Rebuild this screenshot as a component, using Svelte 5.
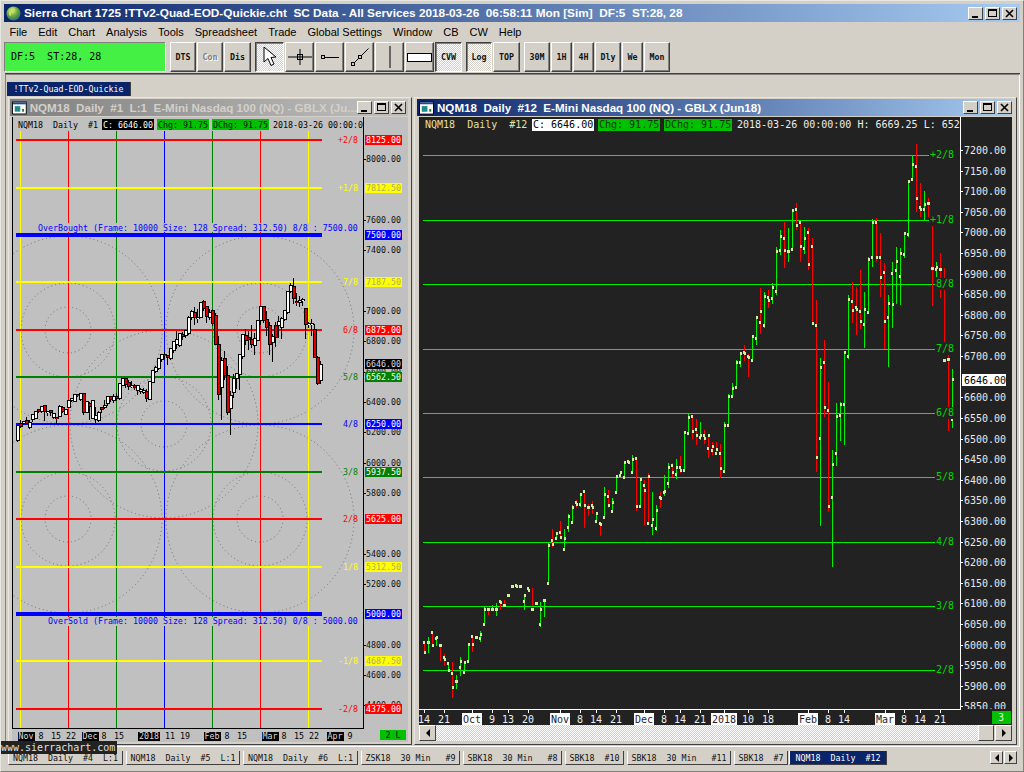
<script>
  const raw = [
    [643,652,642,652,'r'],[637,653,642,642,'g'],[632,644,632,645,'r'],[637,646,638,637,'g'],[645,661,645,645,'r'],[654,666,657,659,'r'],[663,672,663,670,'g'],[662,698,673,687,'r'],
    [675,689,681,681,'g'],[657,676,667,661,'g'],[662,673,672,662,'g'],[643,663,661,644,'g'],[637,652,636,644,'r'],[636,639,637,637,'g'],[631,642,638,634,'g'],[607,626,624,609,'g'],
    [608,615,609,609,'r'],[605,610,609,609,'g'],[603,616,609,609,'g'],[601,610,601,602,'r'],[600,606,605,605,'r'],[595,595,595,595,'g'],[586,586,586,586,'g'],[585,586,585,586,'g'],
    [586,586,586,586,'g'],[595,610,601,595,'g'],[588,590,588,590,'r'],[588,606,609,609,'r'],[603,603,603,603,'g'],[602,627,624,609,'g'],[600,617,600,600,'g'],[543,585,583,545,'g'],
    [529,547,540,544,'r'],[532,540,538,533,'g'],[521,538,532,537,'r'],[529,550,549,538,'g'],[514,532,527,516,'g'],[505,523,522,507,'g'],[500,508,502,504,'r'],[493,507,504,494,'g'],
    [490,528,491,505,'r'],[504,516,507,507,'r'],[501,514,505,507,'r'],[512,523,521,513,'g'],[522,536,523,524,'r'],[487,519,517,494,'g'],[490,508,496,505,'r'],[498,512,511,502,'g'],
    [476,493,492,476,'g'],[471,477,475,472,'g'],[461,478,477,462,'g'],[460,464,461,462,'r'],[455,473,472,459,'g'],[457,511,458,506,'r'],[477,507,506,479,'g'],[480,525,485,490,'r'],
    [473,524,523,476,'r'],[492,535,525,519,'g'],[505,531,528,510,'g'],[492,508,497,498,'r'],[475,496,492,491,'g'],[463,488,483,467,'g'],[463,477,465,472,'r'],[459,479,474,467,'g'],
    [456,473,467,470,'r'],[432,472,470,432,'g'],[414,433,433,417,'g'],[415,439,416,431,'r'],[419,445,429,435,'r'],[422,440,437,435,'g'],[430,444,435,438,'r'],[437,458,448,435,'r'],
    [442,455,450,446,'r'],[442,455,453,449,'r'],[444,478,453,468,'r'],[422,472,471,425,'g'],[394,426,425,396,'g'],[383,398,396,388,'g'],[360,389,387,362,'g'],[353,367,362,353,'g'],
    [345,361,352,353,'r'],[354,377,356,357,'r'],[335,362,360,336,'g'],[316,345,338,317,'g'],[288,334,322,311,'r'],[292,328,325,296,'g'],[290,308,297,300,'r'],[283,304,298,287,'g'],
    [247,295,291,251,'g'],[230,255,250,236,'g'],[222,268,238,250,'r'],[228,262,251,251,'g'],[210,250,249,210,'g'],[203,230,209,225,'r'],[222,262,222,246,'r'],[227,254,248,238,'g'],
    [228,270,232,264,'r'],[238,323,246,323,'r'],[300,472,325,457,'r'],[358,526,438,367,'g'],[340,417,362,407,'r'],[382,512,410,506,'r'],[450,567,497,464,'g'],[403,466,453,416,'g'],
    [402,441,415,404,'g'],[351,445,404,352,'g'],[295,359,356,299,'g'],[282,323,301,310,'r'],[287,335,307,309,'r'],[270,329,311,321,'r'],[292,348,324,309,'g'],[257,312,312,259,'g'],
    [219,267,257,222,'g'],[218,261,222,257,'r'],[233,297,257,277,'r'],[263,349,272,321,'r'],[295,367,317,303,'g'],[262,328,273,304,'g'],[247,304,270,261,'g'],[248,305,276,253,'g'],
    [232,258,254,233,'g'],[180,237,234,181,'g'],[156,181,179,164,'g'],[144,212,166,198,'r'],[183,217,207,209,'r'],[191,220,209,204,'g'],[198,217,203,203,'r'],[226,306,268,268,'r',226,268],
    [262,277,269,267,'g'],[253,298,269,269,'r'],[268,342,360,360,'r',284,357],[355,431,359,359,'r',359,428],[369,428,419,379,'g']
  ];
  const bars = raw.map((b, i) => ({
    x: 424 + 4 * i, hi: b[0], lo: b[1], o: b[2], c: b[3], col: b[4] === 'g' ? '#00f000' : '#ff0000',
    lo2: b[5] ?? b[2], lc2: b[6] ?? b[3], lowEnd: b[6] ? Math.max(b[1], b[6]) : b[1]
  }));
  const ly = (y) => Math.round(280.66 + (y - 150) * 0.368);
  const candles = bars.filter((b) => b.x >= 548).map((b) => ({
    x: Math.round(26 + (b.x - 560) * 0.75),
    hi: ly(b.hi), lo: ly(b.lowEnd), o: ly(b.lo2), c: ly(b.lc2), up: b.lc2 <= b.lo2
  }));

  const vlines = [[20,'#ffff00'],[68,'#ff0000'],[116,'#008000'],[164,'#0000ff'],[212,'#008000'],[260,'#ff0000'],[308,'#ffff00']];
  const levels = [
    ['+2/8',140,'#ff0000','8125.00',2],['+1/8',188,'#ffff00','7812.50',2],['',235,'#0000ff','7500.00',4],['7/8',282,'#ffff00','7187.50',2],
    ['6/8',330,'#ff0000','6875.00',2],['5/8',377,'#008000','6562.50',2],['4/8',424,'#0000ff','6250.00',2],['3/8',472,'#008000','5937.50',2],
    ['2/8',519,'#ff0000','5625.00',2],['1/8',567,'#ffff00','5312.50',2],['',614,'#0000ff','5000.00',4],['-1/8',661,'#ffff00','4687.50',2],['-2/8',709,'#ff0000','4375.00',2]
  ];
  const circles = [];
  for (const [cx, cy] of [[68,330],[260,330],[164,424],[68,519],[260,519]]) for (const r of [23,47,94]) circles.push({ cx, cy, r });
  const leftAxis = [];
  for (const p of [8000,7600,7400,7000,6800,6600,6400,6200,6000,5800,5400,5200,4800,4600,4400]) leftAxis.push({ t: p.toFixed(2), y: Math.round(311 + (7000 - p) * 0.1517) });
  const leftDates = [['Nov',26,1],['8',41],['15',56],['22',71],['Dec',90,1],['8',104],['15',119],['2018',149,1],['11',170],['19',185],['Feb',212,1],['8',227],['15',242],['Mar',270,1],['8',284],['15',299],['22',314],['Apr',335,1],['9',350]];

  const rightLevels = [['+2/8',155,930],['+1/8',220,930],['8/8',284,936],['7/8',349,936],['6/8',413,936],['5/8',477,936],['4/8',542,936],['3/8',606,936],['2/8',670,936]];
  const rightAxis = [];
  for (let i = 0; i <= 27; i++) if (i !== 11) rightAxis.push({ t: (7200 - 50 * i).toFixed(2), y: Math.round(150 + 20.61 * i) });
  const rightDates = [['14',424],['21',444],['Oct',472,1],['9',492],['13',508],['20',528],['Nov',560,1],['8',580],['14',596],['21',616],['Dec',644,1],['8',664],['14',680],['21',700],['2018',724,1],['10',748],['18',768],['Feb',808,1],['8',828],['14',844],['Mar',885,1],['8',904],['14',920],['21',940]];

  const menus = ['File','Edit','Chart','Analysis','Tools','Spreadsheet','Trade','Global Settings','Window','CB','CW','Help'];
  const tabs = [
    ['NQM18  Daily  #4  L:1',115],['NQM18  Daily  #5  L:1',114],['NQM18  Daily  #6  L:1',115],['ZSK18  30 Min   #9',99],['SBK18  30 Min   #8',99],
    ['SBK18  #10',59],['SBK18  30 Min   #11',104],['SBK18  #7',54]
  ];
</script>

<div class="app">
  <header class="titlebar main">
    <svg class="globe" viewBox="0 0 15 15" width="15" height="15">
      <defs>
        <radialGradient id="gl" cx="0.4" cy="0.3" r="0.8"><stop offset="0" stop-color="#e6f2a0"/><stop offset="0.45" stop-color="#6fae3a"/><stop offset="1" stop-color="#1d5a8a"/></radialGradient>
      </defs>
      <circle cx="7.5" cy="7.5" r="7" fill="url(#gl)"/>
      <path d="M3 5 Q6 2 9 3 L8 6 L5 7 L5 10 L3 9Z" fill="#c8e060"/>
    </svg>
    <span class="ttext">Sierra Chart 1725 !TTv2-Quad-EOD-Quickie.cht  SC Data - All Services 2018-03-26  06:58:11 Mon [Sim]  DF:5  ST:28, 28</span>
    <div class="wbtns">
      <button class="wb"><i class="min"></i></button><button class="wb"><i class="max"></i></button><button class="wb"><svg viewBox="0 0 9 9" width="9" height="9"><path d="M1 1L8 8M8 1L1 8" stroke="#000" stroke-width="1.6"/></svg></button>
    </div>
  </header>

  <nav class="menu">
    {#each menus as m}<span>{m}</span>{/each}
  </nav>

  <div class="toolbar">
    <div class="status">DF:5  ST:28, 28</div>
    <div class="grp">
      <button class="tb w26">DTS</button><button class="tb w26 dis">Con</button><button class="tb w27">Dis</button>
    </div>
    <div class="grp">
      <button class="tb w29 on">
        <svg viewBox="0 0 16 22" width="16" height="22"><path d="M2 1 L2 16 L6 12.5 L9 19.5 L12 18 L9 11.5 L14 11 Z" fill="#fff" stroke="#000" stroke-width="1"/></svg>
      </button>
      <button class="tb w29">
        <svg viewBox="0 0 26 18" width="26" height="18"><path d="M1 9H25M13 1V17" stroke="#000"/><rect x="10.5" y="6.5" width="5" height="5" fill="none" stroke="#000"/></svg>
      </button>
      <button class="tb w29">
        <svg viewBox="0 0 20 10" width="20" height="10"><rect x="1.5" y="3.5" width="3" height="3" fill="none" stroke="#000"/><path d="M5 5.5H19" stroke="#000"/></svg>
      </button>
      <button class="tb w29">
        <svg viewBox="0 0 20 20" width="20" height="20"><rect x="1.5" y="15.5" width="3" height="3" fill="none" stroke="#000"/><rect x="8.5" y="8.5" width="3" height="3" fill="none" stroke="#000"/><path d="M4.5 15.5L8.5 11.5M11.5 8.5L18.5 1.5" stroke="#000"/></svg>
      </button>
      <button class="tb w29"><svg viewBox="0 0 2 22" width="2" height="22"><path d="M1 0V22" stroke="#000"/></svg></button>
      <button class="tb w29 rectb"><i></i></button>
      <button class="tb w27 on">CVW</button>
    </div>
    <div class="grp">
      <button class="tb w26 on">Log</button><button class="tb w27">TOP</button>
    </div>
    <div class="grp">
      <button class="tb w26">30M</button><button class="tb w21">1H</button><button class="tb w21">4H</button><button class="tb w26">Dly</button><button class="tb w21">We</button><button class="tb w26">Mon</button>
    </div>
  </div>

  <section class="mdi">
    <div class="subtabs"><span class="subtab">!TTv2-Quad-EOD-Quickie</span></div>

    <article class="win left">
      <header class="titlebar child inactive">
        <svg class="wicon" viewBox="0 0 16 14" width="15" height="14"><rect x="0.5" y="0.5" width="15" height="13" fill="#fff" stroke="#000"/><rect x="1" y="1" width="14" height="2" fill="#1a4a9a"/><rect x="3" y="5" width="6" height="6" fill="#1e8a8a"/><rect x="11" y="8" width="2" height="3" fill="#2a7a2a"/></svg>
        <span class="ttext clip">NQM18  Daily  #1  L:1  E-Mini Nasdaq 100 (NQ) - GBLX (Ju...</span>
        <div class="wbtns">
          <button class="wb"><i class="min"></i></button><button class="wb"><i class="max"></i></button><button class="wb"><svg viewBox="0 0 9 9" width="9" height="9"><path d="M1 1L8 8M8 1L1 8" stroke="#000" stroke-width="1.6"/></svg></button>
        </div>
      </header>
      <svg class="chart lchart" viewBox="12 117 396 625" width="396" height="625">
        <rect x="12" y="117" width="396" height="625" fill="#c0c0c0"/>
        {#each circles as c}
          <circle cx={c.cx} cy={c.cy} r={c.r} fill="none" stroke="#707070" stroke-width="1" stroke-dasharray="1 3"/>
        {/each}
        {#each vlines as v}
          <rect x={v[0]} y="131" width="1" height="597" fill={v[1]}/>
        {/each}
        {#each levels as l}
          <rect x="16" y={l[1] - l[4] / 2} width="306" height={l[4]} fill={l[2]}/>
        {/each}
        {#each candles as c}
          <rect x={c.x} y={c.hi} width="1" height={c.lo - c.hi + 1} fill="#000"/>
          <rect x={c.x - 1} y={Math.min(c.o, c.c) - 1} width="4" height={Math.abs(c.o - c.c) + 2} fill="#000"/>
          <rect x={c.x} y={Math.min(c.o, c.c)} width="2" height={Math.max(Math.abs(c.o - c.c), 1)} fill={c.up ? '#fff' : '#e00000'}/>
        {/each}
        <rect x="38" y="223" width="320" height="9" fill="#c0c0c0"/>
        <text class="t5" x="38" y="231" fill="#0000ff">OverBought (Frame: 10000 Size: 128 Spread: 312.50) 8/8 : 7500.00</text>
        <rect x="48" y="617" width="310" height="9" fill="#c0c0c0"/>
        <text class="t5" x="48" y="624" fill="#0000ff">OverSold (Frame: 10000 Size: 128 Spread: 312.50) 0/8 : 5000.00</text>
        {#each levels as l}
          {#if l[0]}
            <text class="t5" x="358" y={l[1] + 3} fill={l[2]} text-anchor="end">{l[0]}</text>
          {/if}
        {/each}
        <rect x="12" y="117" width="1" height="611" fill="#000"/>
        <rect x="363" y="117" width="1" height="612" fill="#000"/>
        <rect x="12" y="728" width="351" height="1" fill="#000"/>
        {#each leftAxis as a}
          <rect x="364" y={a.y} width="2" height="1" fill="#000"/>
          <text class="t5" x="366" y={a.y + 3} fill="#111">{a.t}</text>
        {/each}
        {#each levels as l}
          <rect x="365" y={l[1] - 5} width="37" height="10" fill={l[2]}/>
          <text class="t5" x="366" y={l[1] + 3} fill={l[2] === '#ffff00' ? '#b0b060' : '#fff'}>{l[3]}</text>
        {/each}
        <rect x="365" y="359" width="37" height="10" fill="#000"/>
        <text class="t5" x="366" y="367" fill="#ddd">6646.00</text>
        <rect x="13" y="118" width="350" height="13" fill="#c0c0c0"/>
        <text class="t5" x="18" y="128" fill="#000" xml:space="preserve">NQM18  Daily  #1</text>
        <rect x="102" y="119" width="52" height="11" fill="#000"/>
        <text class="t5" x="103" y="128" fill="#fff">C: 6646.00</text>
        <rect x="157" y="119" width="52" height="11" fill="#00c000"/>
        <text class="t5" x="158" y="128" fill="#111">Chg: 91.75</text>
        <rect x="212" y="119" width="57" height="11" fill="#00c000"/>
        <text class="t5" x="213" y="128" fill="#111">DChg: 91.75</text>
        <text class="t5" x="273" y="128" fill="#000">2018-03-26 00:00:00</text>
        <rect x="364" y="118" width="44" height="14" fill="#c0c0c0"/>
        <rect x="363" y="118" width="1" height="13" fill="#000"/>
        {#each leftDates as d}
          {#if d[2]}
            <rect x={d[0].length > 3 ? d[1] - 11 : d[1] - 8} y="732" width={d[0].length > 3 ? 22 : 17} height="9" fill="#000"/>
          {/if}
          <text class="t5" x={d[1]} y="739" text-anchor="middle" fill={d[2] ? '#ddd' : '#000'}>{d[0]}</text>
        {/each}
        <rect x="380" y="730" width="26" height="10" fill="#00c000"/>
        <text class="t5" x="393" y="738" text-anchor="middle" fill="#000" xml:space="preserve">2 L</text>
      </svg>
    </article>

    <article class="win right">
      <header class="titlebar child">
        <svg class="wicon" viewBox="0 0 16 14" width="15" height="14"><rect x="0.5" y="0.5" width="15" height="13" fill="#fff" stroke="#000"/><rect x="1" y="1" width="14" height="2" fill="#1a4a9a"/><rect x="3" y="5" width="6" height="6" fill="#1e8a8a"/><rect x="11" y="8" width="2" height="3" fill="#2a7a2a"/></svg>
        <span class="ttext">NQM18  Daily  #12  E-Mini Nasdaq 100 (NQ) - GBLX (Jun18)</span>
        <div class="wbtns">
          <button class="wb"><i class="min"></i></button><button class="wb"><i class="max"></i></button><button class="wb"><svg viewBox="0 0 9 9" width="9" height="9"><path d="M1 1L8 8M8 1L1 8" stroke="#000" stroke-width="1.6"/></svg></button>
        </div>
      </header>
      <svg class="chart rchart" viewBox="419 117 593 608" width="593" height="608">
        <rect x="419" y="117" width="593" height="608" fill="#222"/>
        {#each rightLevels as l}
          <rect x="423" y={l[1]} width={l[2] - 424} height="1" fill="#00f000"/>
        {/each}
        {#each bars as b}
          {#if b.lo > b.hi}<rect x={b.x} y={b.hi} width="1" height={b.lo - b.hi} fill={b.col}/>{/if}
          <rect x={b.x - 1} y={b.o - 1} width="2" height="3" fill="#d0f0a0"/>
          <rect x={b.x} y={b.c - 1} width="2" height="3" fill="#d0f0a0"/>
        {/each}
        {#each rightLevels as l}
          <rect x={l[2]} y={l[1] - 6} width={954 - l[2]} height="12" fill="#222"/>
          <text class="t6" x={l[2]} y={l[1] + 3} fill="#00d800">{l[0]}</text>
        {/each}
        <rect x="419" y="118" width="541" height="13" fill="#222"/>
        <text class="t6" x="425" y="128" fill="#e8e0a0" xml:space="preserve">NQM18  Daily  #12</text>
        <rect x="532" y="119" width="62" height="12" fill="#fff"/>
        <text class="t6" x="533" y="128" fill="#000">C: 6646.00</text>
        <rect x="598" y="119" width="62" height="12" fill="#00c000"/>
        <text class="t6" x="599" y="128" fill="#0a3a0a">Chg: 91.75</text>
        <rect x="664" y="119" width="68" height="12" fill="#00c000"/>
        <text class="t6" x="665" y="128" fill="#0a3a0a">DChg: 91.75</text>
        <text class="t6" x="737" y="128" fill="#eee">2018-03-26 00:00:00 H: 6669.25 L: 652</text>
        <rect x="960" y="117" width="1" height="593" fill="#fff"/>
        {#each rightAxis as a}
          <rect x="961" y={a.y} width="2" height="1" fill="#fff"/>
          <text class="t6" x="964" y={a.y + 4} fill="#e8e8e8">{a.t}</text>
        {/each}
        <rect x="961" y="709" width="51" height="16" fill="#222"/>
        <rect x="419" y="709" width="542" height="1" fill="#fff"/>
        <rect x="962" y="374" width="44" height="12" fill="#fff"/>
        <text class="t6" x="964" y="384" fill="#000">6646.00</text>
        {#each rightDates as d}
          <rect x={d[1]} y="710" width="1" height="3" fill="#fff"/>
          {#if d[2]}
            <rect x={d[0].length > 3 ? d[1] - 13 : d[1] - 10} y="713" width={d[0].length > 3 ? 26 : 20} height="12" fill="#fff"/>
          {/if}
          <text class="t6" x={d[1]} y="723" text-anchor="middle" fill={d[2] ? '#223' : '#eee'}>{d[0]}</text>
        {/each}
        <rect x="992" y="711" width="19" height="13" fill="#00c000"/>
        <text class="t6" x="1001" y="721" text-anchor="middle" fill="#dfd">3</text>
      </svg>
      <div class="hscroll">
        <button class="sb"><i class="al"></i></button>
        <div class="track"></div>
        <button class="sb thumb"></button>
        <button class="sb"><i class="ar"></i></button>
      </div>
    </article>
  </section>

  <footer class="tabs">
    <div class="tablist">
      {#each tabs as t}
        <span class="tab" style="width:{t[1]}px">{t[0]}</span>
      {/each}
      <span class="tab active">NQM18  Daily  #12</span>
    </div>
    <div class="tabnav">
      <button class="sb mini"><i class="al"></i></button><button class="sb mini"><i class="ar"></i></button>
    </div>
  </footer>

  <div class="watermark">www.sierrachart.com</div>
</div>

<style>
  :global(body) { margin: 0; background: #d4d0c8; }
  .app {
    position: relative; box-sizing: border-box; width: 1024px; height: 772px; overflow: hidden;
    background: #d4d0c8; padding: 3px 3px 0; display: flex; flex-direction: column;
    border: 1px solid #808080; border-top-color: #e8e6e0; border-left-color: #e8e6e0;
    font-family: "DejaVu Sans Mono", monospace;
  }
  .titlebar { display: flex; align-items: center; box-sizing: border-box; color: #fff; flex: none; }
  .titlebar.main { height: 18px; background: linear-gradient(90deg, #0a246a, #a6caf0); padding-left: 2px; }
  .ttext {
    font-family: "Liberation Sans", sans-serif; font-weight: 700; font-size: 11.8px; white-space: pre; margin-left: 3px;
  }
  .wbtns { margin-left: auto; display: flex; gap: 2px; margin-right: 3px; }
  .wb {
    box-sizing: border-box; width: 15px; height: 13px; padding: 0; background: #d4d0c8; display: flex; align-items: center; justify-content: center;
    border: 1px solid; border-color: #fff #404040 #404040 #fff; position: relative;
  }
  .min { position: absolute; left: 3px; bottom: 1px; width: 6px; height: 2px; background: #000; }
  .max { position: absolute; left: 2px; top: 1px; width: 9px; height: 8px; box-sizing: border-box; border: 1px solid #000; border-top-width: 2px; }
  .menu {
    height: 20px; flex: none; display: flex; align-items: center;
    font-family: "Liberation Sans", sans-serif; font-size: 11px; color: #000; white-space: pre;
  }
  .menu span { padding: 0 5.5px; }
  .toolbar { height: 30px; flex: none; display: flex; align-items: stretch; }
  .status {
    box-sizing: border-box; width: 162px; background: #44f044; border: 1px solid; border-color: #808080 #fff #fff #808080;
    font-size: 10px; color: #000; line-height: 28px; padding-left: 6px; white-space: pre;
  }
  .grp { display: flex; gap: 1px; margin-left: 4px; }
  .tb {
    box-sizing: border-box; padding: 0; background: #d4d0c8; border: 1px solid; border-color: #fff #404040 #404040 #fff;
    box-shadow: inset -1px -1px #808080; display: flex; align-items: center; justify-content: center;
    font-family: "DejaVu Sans Mono", monospace; font-weight: 700; font-size: 8.3px; color: #111;
  }
  .w21 { width: 21px; } .w26 { width: 26px; } .w27 { width: 27px; } .w29 { width: 29px; }
  .dis { color: #808080; text-shadow: 1px 1px #fff; }
  .on {
    background: repeating-conic-gradient(#fff 0 25%, #d4d0c8 0 50%) 0 0 / 2px 2px;
    border-color: #404040 #fff #fff #404040; box-shadow: inset 1px 1px #808080;
  }
  .rectb i { display: block; width: 25px; height: 9px; background: #fff; border: 1px solid #000; box-sizing: border-box; }
  .mdi { position: relative; flex: 1; min-height: 0; margin-top: 2px; border: 1px solid; border-color: #808080 #fff #fff #808080; margin-left: 1px; box-shadow: 0 -1px #404040; }
  .subtabs { height: 17px; padding: 2px 0 0 1px; box-sizing: border-box; }
  .subtab {
    display: inline-block; box-sizing: border-box; width: 124px; height: 14px; background: #0a246a; color: #fff; font-size: 8.3px; line-height: 14px; text-align: center;
    border-right: 1px solid #404040;
  }
  .win {
    position: absolute; box-sizing: border-box; top: 22px; display: flex; flex-direction: column;
    border: 1px solid; border-color: #e8e6e0 #404040 #404040 #e8e6e0; background: #d4d0c8;
  }
  .win.left { left: 2px; width: 404px; height: 648px; padding: 1px 3px 3px; }
  .win.right { left: 408px; width: 603px; height: 648px; padding: 1px 4px 3px; }
  .child { height: 17px; padding-left: 2px; margin-left: -2px; background: linear-gradient(90deg, #0a246a, #a6caf0); }
  .child.inactive { background: linear-gradient(90deg, #808080, #c0c0c0); }
  .child.inactive .ttext { color: #d4d0c8; }
  .child .ttext { font-size: 11.6px; }
  .clip { max-width: 330px; }
  .win.left .wbtns { margin-right: 2px; }
  .win.right .wbtns { margin-right: 0; }
  .chart { display: block; flex: none; margin-top: 1px; }
  .chart text { font-family: "DejaVu Sans Mono", monospace; white-space: pre; }
  .t5 { font-size: 8.3px; }
  .t6 { font-size: 10px; }
  .hscroll { display: flex; height: 16px; flex: none; }
  .sb {
    box-sizing: border-box; width: 17px; height: 16px; padding: 0; background: #d4d0c8; border: 1px solid; border-color: #fff #404040 #404040 #fff;
    display: flex; align-items: center; justify-content: center; flex: none;
  }
  .thumb { width: 16px; margin-right: 1px; }
  .track { flex: 1; background: repeating-conic-gradient(#fff 0 25%, #d4d0c8 0 50%) 0 0 / 2px 2px; }
  .al, .ar { width: 0; height: 0; border: 4px solid transparent; }
  .al { border-right: 4px solid #000; border-left-width: 0; }
  .ar { border-left: 4px solid #000; border-right-width: 0; }
  .tabs { height: 24px; flex: none; display: flex; box-sizing: border-box; padding: 4px 2px 0 4px; }
  .tablist { display: flex; gap: 3px; align-items: flex-start; }
  .tab {
    box-sizing: border-box; height: 14px; font-size: 8.3px; line-height: 14px; color: #111; white-space: pre; text-align: center; background: #d4d0c8;
    border-right: 1px solid #404040; border-bottom: 1px solid #404040; border-left: 1px solid #fff; flex: none;
  }
  .tab.active { background: #0a246a; color: #fff; width: 98px; height: 14px; margin-left: -2px; }
  .tabnav { margin-left: auto; display: flex; gap: 1px; margin-right: 1px; }
  .mini { width: 13px; height: 13px; }
  .watermark {
    position: absolute; left: -1px; top: 740px; width: 117px; height: 13px; background: #222; color: #e0e0e0; font-size: 10px; line-height: 13px; padding-left: 1px; box-sizing: border-box;
  }
</style>
